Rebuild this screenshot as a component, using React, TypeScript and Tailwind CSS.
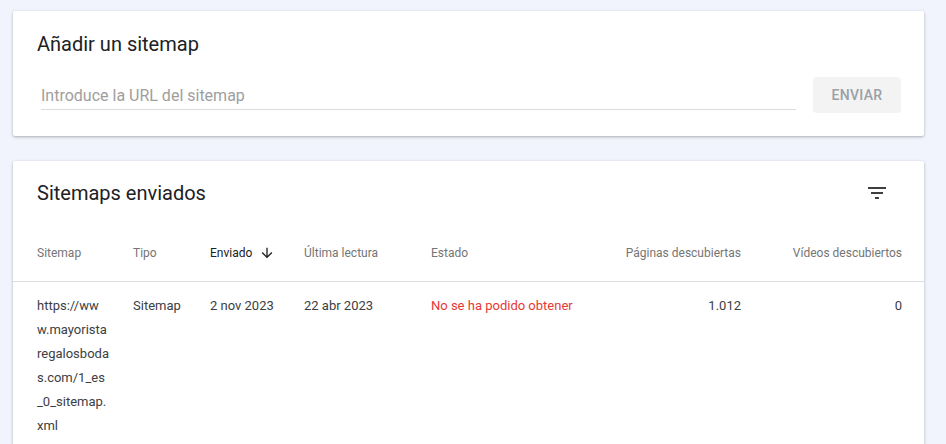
import React from "react";

function FilterIcon() {
  return (
    <svg width="24" height="24" viewBox="0 0 24 24" fill="#3c4043">
      <path d="M10 18h4v-2h-4v2zM3 6v2h18V6H3zm3 7h12v-2H6v2z" />
    </svg>
  );
}

function ArrowDown() {
  return (
    <svg width="16" height="16" viewBox="0 0 24 24" fill="#212121">
      <path d="M20 12l-1.41-1.41L13 16.17V4h-2v12.17l-5.58-5.59L4 12l8 8 8-8z" />
    </svg>
  );
}

export default function App() {
  return (
    <div
      className="w-[946px] h-[444px] overflow-hidden bg-[#f1f4fc] pt-[11px] pl-[13px]"
      style={{ fontFamily: "Roboto, 'Liberation Sans', sans-serif" }}
    >
      {/* Card 1 */}
      <div className="w-[911px] h-[125px] bg-white rounded-[2px] shadow-[0_1px_3px_rgba(0,0,0,0.3)] flex flex-col pl-[24px] pr-[23px]">
        <div className="pt-[20px] text-[20px] leading-[26px] text-[#202124]">Añadir un sitemap</div>
        <div className="flex items-start mt-[19px]">
          <div className="ml-[4px] w-[755px] h-[34px] border-b border-[#dadce0] flex items-end pb-[3px]">
            <span className="text-[16px] text-[#9e9e9e] leading-[20px]">Introduce la URL del sitemap</span>
          </div>
          <div className="ml-[17px] mt-[1px] w-[88px] h-[36px] rounded-[4px] bg-[#f3f3f3] flex items-center justify-center text-[14px] font-medium tracking-[0.3px] text-[#9aa0a6]">
            ENVIAR
          </div>
        </div>
      </div>

      {/* Card 2 */}
      <div className="mt-[25px] w-[911px] h-[300px] bg-white rounded-[2px] shadow-[0_1px_3px_rgba(0,0,0,0.3)]">
        <div className="flex items-center justify-between pl-[24px] pr-[35px] pt-[18px]">
          <div className="text-[20px] leading-[28px] text-[#202124]">Sitemaps enviados</div>
          <FilterIcon />
        </div>
        <div className="flex items-center h-[57px] mt-[18px] border-b border-[#dadce0] pl-[24px] pr-[22px] text-[12px] text-[#757575]">
          <div className="w-[96px]">Sitemap</div>
          <div className="w-[77px]">Tipo</div>
          <div className="w-[94px] flex items-center gap-[7px] text-[#202124]">
            Enviado <ArrowDown />
          </div>
          <div className="w-[127px]">Última lectura</div>
          <div className="w-[150px]">Estado</div>
          <div className="w-[160px] text-right">Páginas descubiertas</div>
          <div className="flex-1 text-right">Vídeos descubiertos</div>
        </div>
        <div className="flex items-start pl-[24px] pr-[22px] pt-[12px] text-[13px] leading-[24px] text-[#3c4043]">
          <div className="w-[96px]">
            https://ww<br />
            w.mayorista<br />
            regalosboda<br />
            s.com/1_es<br />
            _0_sitemap.<br />
            xml
          </div>
          <div className="w-[77px]">Sitemap</div>
          <div className="w-[94px]">2 nov 2023</div>
          <div className="w-[127px]">22 abr 2023</div>
          <div className="w-[150px] text-[#e53935]">No se ha podido obtener</div>
          <div className="w-[160px] text-right">1.012</div>
          <div className="flex-1 text-right">0</div>
        </div>
      </div>
    </div>
  );
}
